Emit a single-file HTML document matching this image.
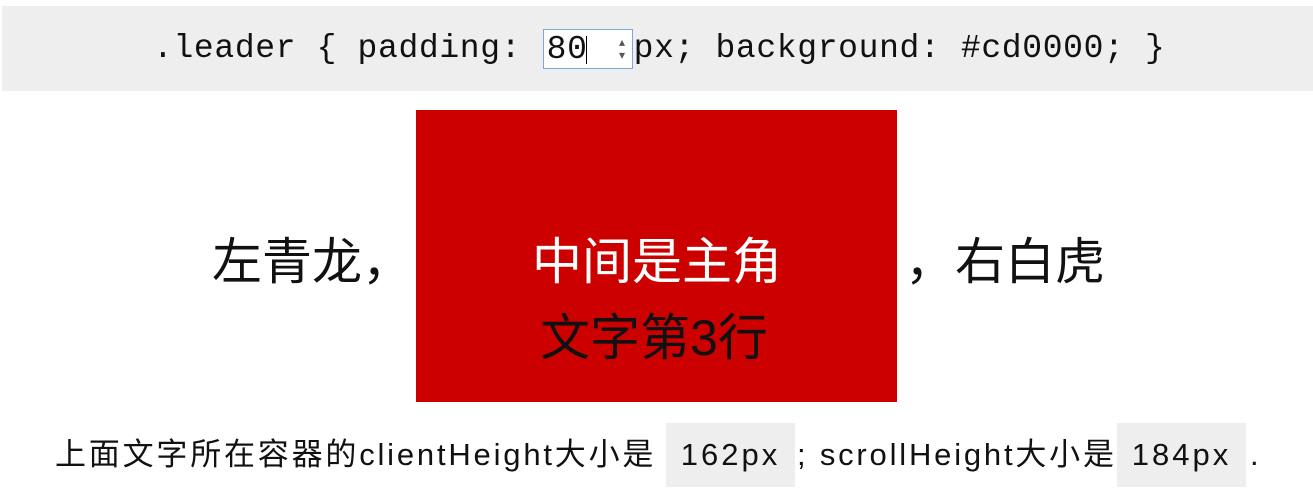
<!DOCTYPE html>
<html><head><meta charset="utf-8"><style>
body{margin:0;width:1313px;height:488px;background:#fff;position:relative;overflow:hidden;font-family:"Liberation Sans","Noto Sans CJK SC",sans-serif;}
.bar{position:absolute;left:2px;top:6px;width:1311px;height:85px;background:#eeeeee;}
.code{position:absolute;left:153px;top:29px;font-family:"Liberation Mono",monospace;font-size:33px;letter-spacing:0.65px;line-height:40px;white-space:pre;color:#111;}
.inp{display:inline-block;vertical-align:top;width:90px;height:40px;border:1px solid #7aa7e0;background:#fff;box-sizing:border-box;position:relative;margin:0 1px;}
.inp span{position:absolute;left:3px;top:0;}
.inp i{position:absolute;left:42px;top:6px;width:1px;height:28px;background:#000;}
.inp b{position:absolute;right:6px;top:6px;font-size:12px;line-height:13px;color:#555;font-weight:normal;font-family:"DejaVu Sans",sans-serif;}
.t{position:absolute;font-size:50px;line-height:60px;white-space:nowrap;color:#111;}
.red{position:absolute;left:416px;top:110px;width:481px;height:292px;background:#cd0000;}
.bot{position:absolute;top:423px;height:64px;line-height:64px;font-size:31px;white-space:nowrap;color:#111;letter-spacing:2.8px;}
.g{position:absolute;top:423px;width:129px;height:64px;line-height:64px;background:#eeeeee;text-align:center;font-size:31px;letter-spacing:3px;color:#111;}
</style></head><body>
<div class="bar"></div>
<div class="code">.leader { padding: <span class="inp"><span>80</span><i></i><b>▴<br>▾</b></span>px; background: #cd0000; }</div>
<div class="red"></div>
<div class="t" style="left:212px;top:232px">左青龙，</div>
<div class="t" style="left:532px;top:232px;color:#fff">中间是主角</div>
<div class="t" style="left:540px;top:308px">文字第3行</div>
<div class="t" style="left:905px;top:232px">，右白虎</div>
<div class="bot" style="left:55px">上面文字所在容器的clientHeight大小是</div>
<div class="g" style="left:666px">162px</div>
<div class="bot" style="left:797px">; scrollHeight大小是</div>
<div class="g" style="left:1117px">184px</div>
<div class="bot" style="left:1250px">.</div>
</body></html>
